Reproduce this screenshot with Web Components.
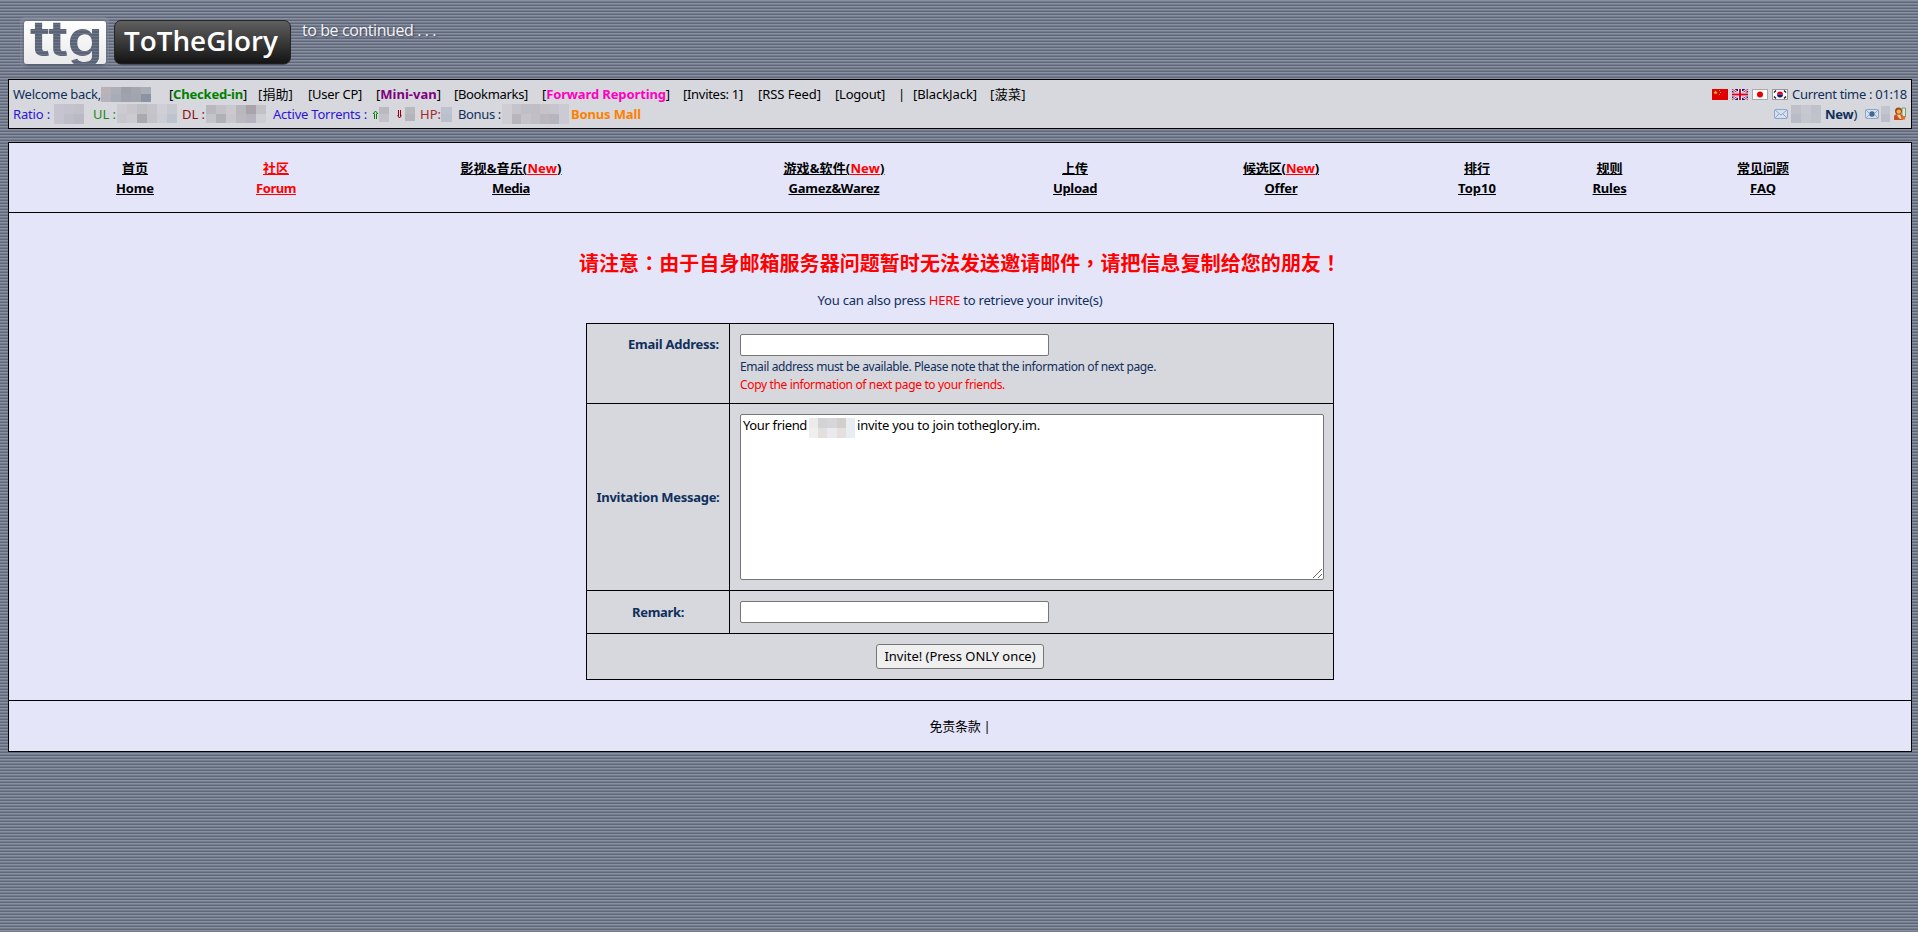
<!DOCTYPE html>
<html lang="zh-CN">
<head>
<meta charset="utf-8">
<title>TTG Invite</title>
<style>
html{height:100%}
body{margin:0;min-height:932px;font:13px/20px "Noto Sans","Open Sans","Noto Sans CJK SC",sans-serif;color:#0f2f5c;
background:repeating-linear-gradient(to bottom,#8990a0 0 1px,#737b8d 1px 2px,#5f677b 2px 3px)}
</style>
</head>
<body>
<ttg-page></ttg-page>
<script>
function define(name, html, ready){
  const t=document.createElement('template'); t.innerHTML=html;
  customElements.define(name, class extends HTMLElement{
    connectedCallback(){
      if(this.shadowRoot) return;
      this.attachShadow({mode:'open'}).appendChild(t.content.cloneNode(true));
      if(ready) ready.call(this,this.shadowRoot);
    }
  });
}

/* A run of text tracked to a fixed width: w = width, gap = space before it, u = underlined */
define('fit-text', `<style>
:host{display:inline-block;white-space:nowrap;flex:none}
span{display:inline-block;white-space:pre}
:host([u]) span{text-decoration:underline;text-underline-offset:1px}
</style><span><slot></slot></span>`, function(root){
  const w=+this.getAttribute('w'), gap=this.getAttribute('gap');
  if(gap) this.style.marginLeft=gap+'px';
  const nat=root.querySelector('span').getBoundingClientRect().width;
  const n=[...this.textContent].length;
  if(w && nat){ this.style.width=w+'px'; this.style.letterSpacing=((w-nat)/n).toFixed(3)+'px'; }
});

/* Censored value: a grid of tinted blocks */
define('pixel-mask', `<style>
:host{display:block;flex:none;overflow:hidden}
div{display:grid;height:100%}
</style><div></div>`, function(root){
  const g=n=>this.getAttribute(n);
  this.style.cssText+=`;width:${g('w')}px;height:${g('h')}px;margin-left:${g('gap')||0}px;margin-top:${g('dy')||0}px`;
  const d=root.querySelector('div'), c=g('colors').split(' ');
  d.style.gridTemplateColumns=`repeat(${g('cols')},1fr)`;
  d.style.gridAutoRows='1fr';
  for(const x of c){const i=document.createElement('i'); i.style.background='#'+x; d.appendChild(i);}
});

define('site-banner', `<style>
:host{display:block;height:79px}
.row{display:flex;align-items:flex-start;padding:14px 0 0 18px}
svg{display:block;flex:none}
p{margin:6px 0 0 6px;font:16px/20px "Open Sans","Noto Sans",sans-serif;color:#f4f5f8;text-shadow:1px 1px 2px #3c4354}
</style>
<div class="row">
<svg width="278" height="60" viewBox="18 14 278 60" font-family="Open Sans,Noto Sans,sans-serif" overflow="visible">
<defs>
<linearGradient id="p" x1="0" y1="0" x2="0" y2="1"><stop offset="0" stop-color="#fff"/><stop offset="1" stop-color="#e9e9eb"/></linearGradient>
<linearGradient id="b" x1="0" y1="0" x2="0" y2="1"><stop offset="0" stop-color="#606060"/><stop offset="1" stop-color="#121212"/></linearGradient>
<filter id="s" x="-20%" y="-20%" width="140%" height="150%"><feDropShadow dx="0" dy="1.5" stdDeviation="2" flood-color="#222a3c" flood-opacity=".6"/></filter>
<pattern id="st" width="4" height="3" patternUnits="userSpaceOnUse"><rect width="4" height="3" fill="#5b6376"/><rect width="4" height="1" fill="#6d7588"/></pattern>
</defs>
<rect x="20" y="17" width="89" height="50" rx="5" fill="#9aa1b0" opacity=".35"/>
<rect x="24" y="21" width="82" height="43" rx="3" fill="url(#p)" filter="url(#s)"/>
<text x="30" y="56" font-size="49" font-weight="600" textLength="73" lengthAdjust="spacingAndGlyphs" fill="url(#st)" font-family="Inter,sans-serif">ttg</text>
<rect x="114.5" y="20.500" width="176" height="43.500" rx="6.500" fill="url(#b)" stroke="#252525"/>
<text x="124" y="50.500" font-size="27" font-weight="600" textLength="154" lengthAdjust="spacingAndGlyphs" fill="#fff">ToTheGlory</text>
</svg>
<p><fit-text w="134">to be continued . . .</fit-text></p>
</div>`);

define('flag-icon', `<style>:host{display:block;width:16px;height:11px;flex:none}svg{display:block}</style><svg width="16" height="11"></svg>`, function(root){
  const art={
    cn:'<rect width="16" height="11" fill="#e00000"/><path d="M3.500 1.500l.6 1.300 1.400.1-1 1 .3 1.400-1.300-.7-1.200.7.300-1.400-1-1 1.400-.1z" fill="#ffde00"/><path d="M7 1h1v1H7zM8 3h1v1H8zM7 5h1v1H7z" fill="#f5a000"/>',
    gb:'<rect width="16" height="11" fill="#14147c"/><path d="M0 0l16 11M16 0L0 11" stroke="#fff" stroke-width="2.600"/><path d="M0 0l16 11M16 0L0 11" stroke="#d01030" stroke-width="1"/><path d="M8 0v11M0 5.500h16" stroke="#fff" stroke-width="4"/><path d="M8 0v11M0 5.500h16" stroke="#d80020" stroke-width="2"/>',
    jp:'<rect x=".5" y=".5" width="15" height="10" fill="#fff" stroke="#aaa"/><circle cx="8" cy="5.500" r="3" fill="#e80000"/>',
    kr:'<rect x=".5" y=".5" width="15" height="10" fill="#fff" stroke="#999"/><path d="M5 5.500a3 3 0 0 1 6 0z" fill="#e00020"/><path d="M5 5.500a3 3 0 0 0 6 0z" fill="#15158a"/><path d="M2 3.500l2-2M12 1.500l2 2M2 7.500l2 2M12 9.500l2-2" stroke="#222" stroke-width="1.500"/>'
  };
  root.querySelector('svg').innerHTML=art[this.getAttribute('code')];
});

define('status-icon', `<style>:host{display:block;flex:none}svg{display:block}</style><svg></svg>`, function(root){
  const env='<rect x=".5" y=".5" width="13" height="9" rx="1" fill="#d5e0f0" stroke="#8ea6c8"/>';
  const art={
    mail:[14,10,env+'<path d="M1 1l6 5 6-5M1 9l4-4M13 9l-4-4" fill="none" stroke="#8ea6c8"/>'],
    seen:[14,10,env+'<path d="M1 1l3 3M13 1l-3 3M1 9l3-3M13 9l-3-3" stroke="#8ea6c8"/><circle cx="7" cy="5" r="2.700" fill="#46658f"/>'],
    user:[12,14,'<path d="M8 1h3.500v9H8z" fill="#dfe9d8" stroke="#7d9a78"/><path d="M0 13V9.500Q0 7 4.500 7T9 9.500V13z" fill="#c8501c"/><path d="M3 7.500h3l2 4.500H6l-2-2z" fill="#f4d0a0"/><circle cx="4.500" cy="4" r="3.500" fill="#9c4a16"/><circle cx="4.800" cy="4.600" r="2.200" fill="#ffb04e"/><rect x="7.500" y="9" width="3.500" height="3.500" fill="#e66a28"/>'],
    up:[7,9,'<path d="M2.500 9V3.500M4.500 9V3.500M1 4L3.500 1 6 4" fill="none" stroke="#008000" stroke-width="1"/>'],
    down:[5,9,'<path d="M1.500 0v6M3.500 0v6M.5 5.500L2.500 8 4.500 5.500" fill="none" stroke="#900000" stroke-width="1"/>']
  }[this.getAttribute('name')];
  const s=root.querySelector('svg');
  s.setAttribute('width',art[0]); s.setAttribute('height',art[1]); s.innerHTML=art[2];
  this.style.marginLeft=(this.getAttribute('gap')||0)+'px';
});

define('status-bar', `<style>
:host{display:flex;justify-content:space-between;box-sizing:border-box;height:50px;margin:0 6px 0 8px;border:1px solid #000;background:#d7d8dd;padding:4px 4px 0 4px}
.l{display:flex;align-items:center;height:20px;color:#0f2f5c}
.r .l{justify-content:flex-end}
.k{color:#000}
</style>
<div>
<div class="l"><fit-text w="88">Welcome back,</fit-text><pixel-mask w="50" h="15" cols="5" colors="b9b3b8 adafb8 9fa1aa a2a6af a9adb8 b5b2bb a8acb7 a0a3ae a0a5ae 8c93a2"></pixel-mask>
<fit-text class="k" gap="18" w="78">[<b style="color:#008000">Checked-in</b>]</fit-text>
<fit-text class="k" gap="11" w="35">[捐助]</fit-text>
<fit-text class="k" gap="15" w="54">[User CP]</fit-text>
<fit-text class="k" gap="14" w="65">[<b style="color:#800080">Mini-van</b>]</fit-text>
<fit-text class="k" gap="13" w="74">[Bookmarks]</fit-text>
<fit-text class="k" gap="14" w="128">[<b style="color:#ff00c0">Forward Reporting</b>]</fit-text>
<fit-text class="k" gap="13" w="60">[Invites: 1]</fit-text>
<fit-text class="k" gap="15" w="63">[RSS Feed]</fit-text>
<fit-text class="k" gap="14" w="50">[Logout]</fit-text>
<fit-text class="k" gap="13" w="6">|</fit-text>
<fit-text class="k" gap="9" w="64">[BlackJack]</fit-text>
<fit-text class="k" gap="13" w="36">[菠菜]</fit-text></div>
<div class="l"><fit-text w="37" style="color:#2b15d8">Ratio :</fit-text><pixel-mask gap="4" w="30" h="20" cols="3" colors="c5c4d0 c4c2cc c2c1c9 c6c4cf bebec7 babac4"></pixel-mask>
<fit-text gap="9" w="23" style="color:#1a8a1a">UL :</fit-text><pixel-mask gap="1" w="60" h="19" cols="6" dy="-1" colors="cccbd1 c7c6cb c0bfc4 c5c4c9 d0cfd6 c8c9d0 c8c7cd cccbd0 aaaaae c4c3ca ccced3 bfc3ce"></pixel-mask>
<fit-text gap="5" w="23" style="color:#8b1010">DL :</fit-text><pixel-mask gap="1" w="60" h="18" cols="6" colors="b9b8bf c3c2c8 cbc9cf b8b7be a9a4ab c3c1c8 c4c3c9 b0b0b7 c8c7cf bbb8c0 b5b4be cdced6"></pixel-mask>
<fit-text gap="7" w="94" style="color:#2b15d8">Active Torrents :</fit-text><status-icon name="up" gap="5"></status-icon><pixel-mask w="10" h="15" cols="1" colors="b9babf c2c2c8"></pixel-mask>
<status-icon name="down" gap="8"></status-icon><pixel-mask gap="3" w="10" h="14" cols="1" colors="b9b9be b4b5bb"></pixel-mask>
<fit-text gap="5" w="21" style="color:#a52a2a">HP:</fit-text><pixel-mask w="11" h="15" cols="1" colors="bdc2cf b9c0cc"></pixel-mask>
<fit-text gap="6" w="43">Bonus :</fit-text><pixel-mask gap="1" w="67" h="20" cols="7" dy="-1" colors="cfced4 c6c4cb c0bfc6 c0bec5 c5c2c8 c6c4cd cccbd4 cfced4 b8b6bd c5c4ca c0bfc5 bab8be b6b5be cccbd5"></pixel-mask>
<fit-text gap="2" w="70" style="color:#ff8000;font-weight:bold">Bonus Mall</fit-text></div>
</div>
<div class="r">
<div class="l" style="gap:4px"><flag-icon code="cn"></flag-icon><flag-icon code="gb"></flag-icon><flag-icon code="jp"></flag-icon><flag-icon code="kr"></flag-icon><fit-text w="115">Current time : 01:18</fit-text></div>
<div class="l"><status-icon name="mail"></status-icon><pixel-mask gap="3" w="30" h="18" cols="3" colors="bfc0ca c7c8d0 c0c2cb b9bbc7 c5c7cf c0c2cc"></pixel-mask>
<fit-text gap="4" w="32"><b>New</b>)</fit-text><status-icon name="seen" gap="8"></status-icon><pixel-mask gap="2" w="9" h="16" cols="1" colors="c2c4ce bbbec8"></pixel-mask><status-icon name="user" gap="4" style="padding-right:1px"></status-icon></div>
</div>`);

/* Two-line navigation entry: Chinese label over the English one */
define('nav-item', `<style>
:host{display:flex;flex-direction:column;align-items:center;font-weight:bold;color:#000;line-height:20px;white-space:nowrap}
</style><a><slot></slot></a><a><slot name="en"></slot></a>`);

define('main-nav', `<style>
:host{display:grid;grid-template-columns:218px 64px 406px 240px 242px 170px 222px 43px 264px;box-sizing:border-box;height:70px;padding:15px 0 0 17px;border-bottom:1px solid #000}
.n{color:#f00;text-decoration:underline;text-underline-offset:1px}
</style>
<nav-item><fit-text u w="26">首页</fit-text><fit-text u slot="en" w="38">Home</fit-text></nav-item>
<nav-item style="color:#f00"><fit-text u w="26">社区</fit-text><fit-text u slot="en" w="40">Forum</fit-text></nav-item>
<nav-item><fit-text u w="101">影视&amp;音乐(<span class="n">New</span>)</fit-text><fit-text u slot="en" w="38">Media</fit-text></nav-item>
<nav-item><fit-text u w="101">游戏&amp;软件(<span class="n">New</span>)</fit-text><fit-text u slot="en" w="91">Gamez&amp;Warez</fit-text></nav-item>
<nav-item><fit-text u w="26">上传</fit-text><fit-text u slot="en" w="44">Upload</fit-text></nav-item>
<nav-item><fit-text u w="76">候选区(<span class="n">New</span>)</fit-text><fit-text u slot="en" w="33">Offer</fit-text></nav-item>
<nav-item><fit-text u w="26">排行</fit-text><fit-text u slot="en" w="38">Top10</fit-text></nav-item>
<nav-item><fit-text u w="26">规则</fit-text><fit-text u slot="en" w="34">Rules</fit-text></nav-item>
<nav-item><fit-text u w="52">常见问题</fit-text><fit-text u slot="en" w="26">FAQ</fit-text></nav-item>`);

define('text-field', `<style>
:host{display:block;box-sizing:border-box;width:309px;height:22px;border:1px solid #767676;border-radius:2px;background:#fff}
</style>`);

define('message-box', `<style>
:host{display:flex;flex-direction:column;justify-content:space-between;box-sizing:border-box;width:584px;height:166px;border:1px solid #767676;border-radius:2px;background:#fff;color:#000}
.t{display:flex;height:23px;padding:0 0 0 2px;line-height:20px}
svg{align-self:flex-end;margin:0 1px 1px 0}
</style>
<div class="t"><fit-text w="64">Your friend</fit-text><pixel-mask gap="2" w="46" h="20" dy="3" cols="5" colors="ecebeb d3d3d5 d6d6d8 d0cfcc e8edf1 efefed e2dfdc e9eaef e5e0dd e7edf3"></pixel-mask><fit-text gap="2" w="183">invite you to join totheglory.im.</fit-text></div>
<svg width="9" height="9"><path d="M0 9L9 0M5 9l4-4" stroke="#666" fill="none"/></svg>`);

define('form-row', `<style>
:host{display:grid;grid-template-columns:143px 1fr;box-sizing:border-box;border-top:1px solid #000}
.h{border-right:1px solid #000;display:flex;align-items:center;justify-content:center;font-weight:bold}
:host([top]) .h{align-items:flex-start;justify-content:flex-end;padding:10px 10px 0 0}
.c{padding:10px 0 0 10px}
</style><div class="h"><slot name="label"></slot></div><div class="c"><slot></slot></div>`);

define('invite-form', `<style>
:host{display:block;box-sizing:border-box;width:748px;margin:0 auto;border:1px solid #000;border-top:0;background:#d7d8dd}
.s{font-size:12px;line-height:18px;display:block}
.act{display:flex;justify-content:center;border-top:1px solid #000;height:46px;padding-top:10px;box-sizing:border-box}
button{box-sizing:border-box;width:168px;height:25px;border:1px solid #767676;border-radius:3px;background:#efefef;color:#000;padding:0;font:13px/23px "Noto Sans",sans-serif}
</style>
<form-row top style="height:80px"><fit-text slot="label" w="91">Email Address:</fit-text><text-field></text-field>
<div class="s" style="margin-top:2px"><fit-text w="416">Email address must be available. Please note that the information of next page.</fit-text></div>
<div class="s" style="color:#f00"><fit-text w="265">Copy the information of next page to your friends.</fit-text></div></form-row>
<form-row style="height:187px"><fit-text slot="label" w="123">Invitation Message:</fit-text><message-box></message-box></form-row>
<form-row style="height:43px"><fit-text slot="label" w="52">Remark:</fit-text><text-field></text-field></form-row>
<div class="act"><button><fit-text w="151">Invite! (Press ONLY once)</fit-text></button></div>`);

define('main-panel', `<style>
:host{display:block;box-sizing:border-box;height:610px;margin:13px 6px 0 8px;border:1px solid #000;background:#e4e5f9}
h2{margin:37px 0 0;font-size:20px;line-height:28px;text-align:center;color:#f00}
h2 i{font-style:normal;font-family:"Noto Sans CJK TC",sans-serif;line-height:1}
.p{text-align:center;margin:12px 0 13px;line-height:20px}
.f{margin-top:20px;border-top:1px solid #000;height:50px;line-height:50px;text-align:center;color:#000}
</style>
<main-nav></main-nav>
<h2><fit-text w="762">请注意<i lang="zh-TW">：</i>由于自身邮箱服务器问题暂时无法发送邀请邮件<i lang="zh-TW">，</i>请把信息复制给您的朋友<i lang="zh-TW">！</i></fit-text></h2>
<div class="p"><fit-text w="285">You can also press <span style="color:#f00">HERE</span> to retrieve your invite(s)</fit-text></div>
<invite-form></invite-form>
<div class="f"><fit-text w="61">免责条款 |</fit-text></div>`);

define('ttg-page', `<style>:host{display:block}</style><site-banner></site-banner><status-bar></status-bar><main-panel></main-panel>`);
</script>
</body>
</html>
